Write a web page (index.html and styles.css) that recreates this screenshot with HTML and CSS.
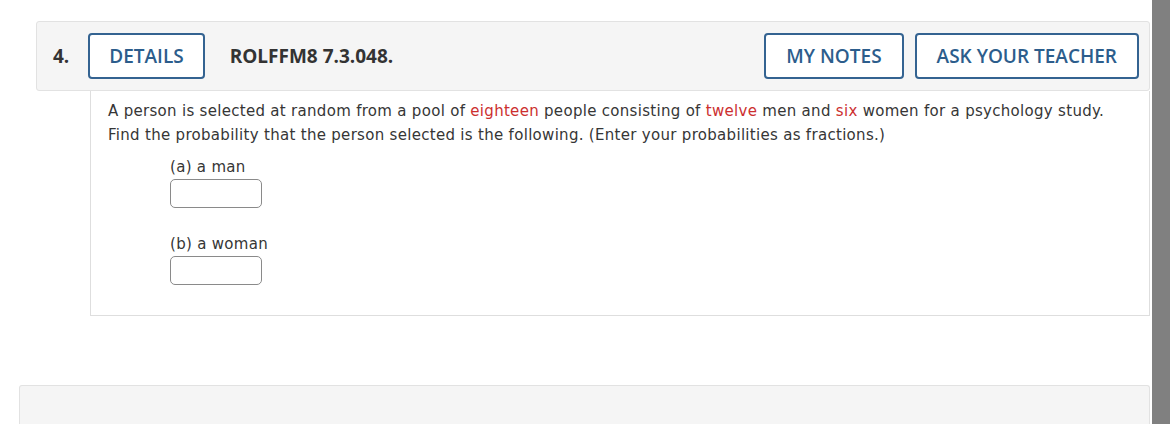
FILE: index.html
```html
<!DOCTYPE html>
<html lang="en">
<head>
<meta charset="utf-8">
<title>Question 4</title>
<link rel="stylesheet" href="styles.css">
</head>
<body>
<div class="page">
  <main class="main">
    <section class="question">
      <header class="q-header">
        <span class="q-num">4.</span>
        <button class="btn btn-details">DETAILS</button>
        <span class="q-title">ROLFFM8 7.3.048.</span>
        <div class="q-actions">
          <button class="btn">MY NOTES</button>
          <button class="btn">ASK YOUR TEACHER</button>
        </div>
      </header>
      <div class="q-body">
        <p class="q-text">A person is selected at random from a pool of <span class="red">eighteen</span> people consisting of <span class="red">twelve</span> men and <span class="red">six</span> women for a psychology study.<br>Find the probability that the person selected is the following. (Enter your probabilities as fractions.)</p>
        <div class="part">
          <div class="part-label">(a) a man</div>
          <input class="answer" type="text" aria-label="a man">
        </div>
        <div class="part">
          <div class="part-label">(b) a woman</div>
          <input class="answer" type="text" aria-label="a woman">
        </div>
      </div>
    </section>
    <section class="next-card"></section>
  </main>
  <div class="scrollbar"></div>
</div>
</body>
</html>
```
FILE: styles.css
```css
html, body {
  margin: 0;
  padding: 0;
  height: 100%;
  background: #fff;
  overflow: hidden;
}
.page {
  display: flex;
  height: 424px;
}
.main {
  width: 1152px;
  flex: none;
  padding-top: 21px;
  box-sizing: border-box;
  display: flex;
  flex-direction: column;
}
.scrollbar {
  flex: 1;
  background: #808080;
}
.question {
  margin-left: 36px;
  width: 1114px;
}
.q-header {
  height: 70px;
  box-sizing: border-box;
  display: flex;
  align-items: center;
  background: #f5f5f5;
  border: 1px solid #e2e2e2;
  border-radius: 3px;
  padding: 0 10px 0 16px;
  font-family: "Open Sans", "Noto Sans", sans-serif;
}
.q-num {
  font-size: 19px;
  font-weight: 700;
  color: #333;
  margin-right: 19px;
}
.btn {
  height: 46px;
  box-sizing: border-box;
  border: 2px solid #346391;
  border-radius: 4px;
  background: #fff;
  color: #2c5d8c;
  font-family: "Open Sans", "Noto Sans", sans-serif;
  font-size: 19px;
  font-weight: 600;
  padding: 0 20px;
  cursor: pointer;
}
.btn-details {
  padding: 0 19px;
}
.q-title {
  margin-left: 25px;
  font-size: 19px;
  font-weight: 700;
  color: #333;
}
.q-actions {
  margin-left: auto;
  display: flex;
  gap: 11px;
}
.q-body {
  margin-left: 54px;
  border: 1px solid #dedede;
  border-top: none;
  padding: 8px 17px 30px 17px;
  font-family: "DejaVu Sans", Verdana, sans-serif;
  font-size: 15px;
  letter-spacing: 0.3px;
  line-height: 24px;
  color: #363636;
}
.q-text {
  margin: 0 0 8px 0;
}
.red {
  color: #cc2f2f;
}
.part {
  margin-left: 62px;
}
.part + .part {
  margin-top: 24px;
}
.part-label {
  line-height: 24px;
}
.answer {
  display: block;
  width: 92px;
  height: 29px;
  box-sizing: border-box;
  border: 1px solid #8a8a8a;
  border-radius: 5px;
  background: #fff;
  margin: 0;
}
.next-card {
  margin-top: 69px;
  margin-left: 19px;
  width: 1131px;
  flex: 1;
  background: #f5f5f5;
  border: 1px solid #e2e2e2;
  border-bottom: none;
  border-radius: 3px 3px 0 0;
  box-sizing: border-box;
}
```
